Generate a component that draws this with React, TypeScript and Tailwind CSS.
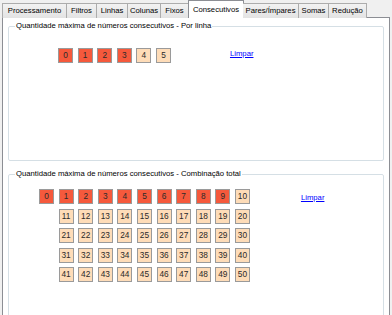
const TABS = [
  { label: 'Processamento', w: 'w-[65px]' },
  { label: 'Filtros', w: 'w-[30px]' },
  { label: 'Linhas', w: 'w-[31px]' },
  { label: 'Colunas', w: 'w-[33px]' },
  { label: 'Fixos', w: 'w-[28px]' },
  { label: 'Consecutivos', w: 'w-[56px]', selected: true },
  { label: 'Pares/Ímpares', w: 'w-[56px]' },
  { label: 'Somas', w: 'w-[30px]' },
  { label: 'Redução', w: 'w-[38px]' },
]

function NumBox({ n, on }: { n: number; on: boolean }) {
  return (
    <div
      className={
        'w-[15px] h-[15px] flex items-center justify-center border border-[#9a9a9a] text-[8.3px] leading-none text-[#2a2a2a] ' +
        (on ? 'bg-[#f5593c]' : 'bg-[#fedcb8]')
      }
    >
      {n}
    </div>
  )
}

function Limpar({ className }: { className: string }) {
  return (
    <a href="#" className={'text-[7.7px] leading-[10px] text-[#0000ff] underline ' + className}>
      Limpar
    </a>
  )
}

export default function App() {
  const rowLine = [0, 1, 2, 3, 4, 5]
  const total: (number | null)[] = []
  for (let i = 0; i <= 10; i++) total.push(i)
  for (let r = 1; r <= 4; r++) {
    total.push(null)
    for (let c = 1; c <= 10; c++) total.push(r * 10 + c)
  }

  return (
    <div
      className="w-[392px] h-[315px] overflow-hidden bg-[#f0f0f0] flex flex-col"
      style={{ fontFamily: '"Liberation Sans", Arial, sans-serif' }}
    >
      {/* Tab strip */}
      <div className="flex items-end h-[18px] shrink-0 pl-[2px] relative z-10">
        {TABS.map((t) =>
          t.selected ? (
            <div
              key={t.label}
              className={t.w + ' h-[18px] -mx-[1px] bg-white border border-b-0 border-[#8c8e94] flex items-center justify-center text-[7.7px] text-black'}
            >
              {t.label}
            </div>
          ) : (
            <div
              key={t.label}
              className={t.w + ' h-[15px] bg-gradient-to-b from-[#f2f2f2] to-[#e3e3e3] border border-b-0 border-l-0 first:border-l border-[#acacac] flex items-center justify-center text-[7.7px] text-black'}
            >
              {t.label}
            </div>
          )
        )}
      </div>

      {/* Tab page */}
      <div className="h-[340px] shrink-0 mx-[2px] -mt-[1px] bg-white border border-[#8c8e94] flex flex-col pt-[3px] px-[5px]">
        <fieldset className="h-[140px] shrink-0 border border-[#d5dfe5] rounded-[2px]">
          <legend className="ml-[6px] px-[1px] text-[7.7px] leading-[10px] text-black">
            Quantidade máxima de números consecutivos - Por linha
          </legend>
          <div className="flex items-start pl-[49px] mt-[17px]">
            <div className="flex gap-[4.6px]">
              {rowLine.map((n) => (
                <NumBox key={n} n={n} on={n < 4} />
              ))}
            </div>
            <Limpar className="ml-[59px] mt-[1px]" />
          </div>
        </fieldset>

        <fieldset className="h-[170px] shrink-0 mt-[8px] border border-[#d5dfe5] rounded-[2px]">
          <legend className="ml-[6px] px-[1px] text-[7.7px] leading-[10px] text-black">
            Quantidade máxima de números consecutivos - Combinação total
          </legend>
          <div className="flex items-start pl-[30px] mt-[10px]">
            <div className="grid grid-cols-[repeat(11,15px)] gap-x-[4.6px] gap-y-[4.5px]">
              {total.map((n, i) =>
                n === null ? <div key={'e' + i} /> : <NumBox key={n} n={n} on={n >= 0 && n <= 9} />
              )}
            </div>
            <Limpar className="ml-[51px] mt-[4px]" />
          </div>
        </fieldset>
      </div>
    </div>
  )
}
